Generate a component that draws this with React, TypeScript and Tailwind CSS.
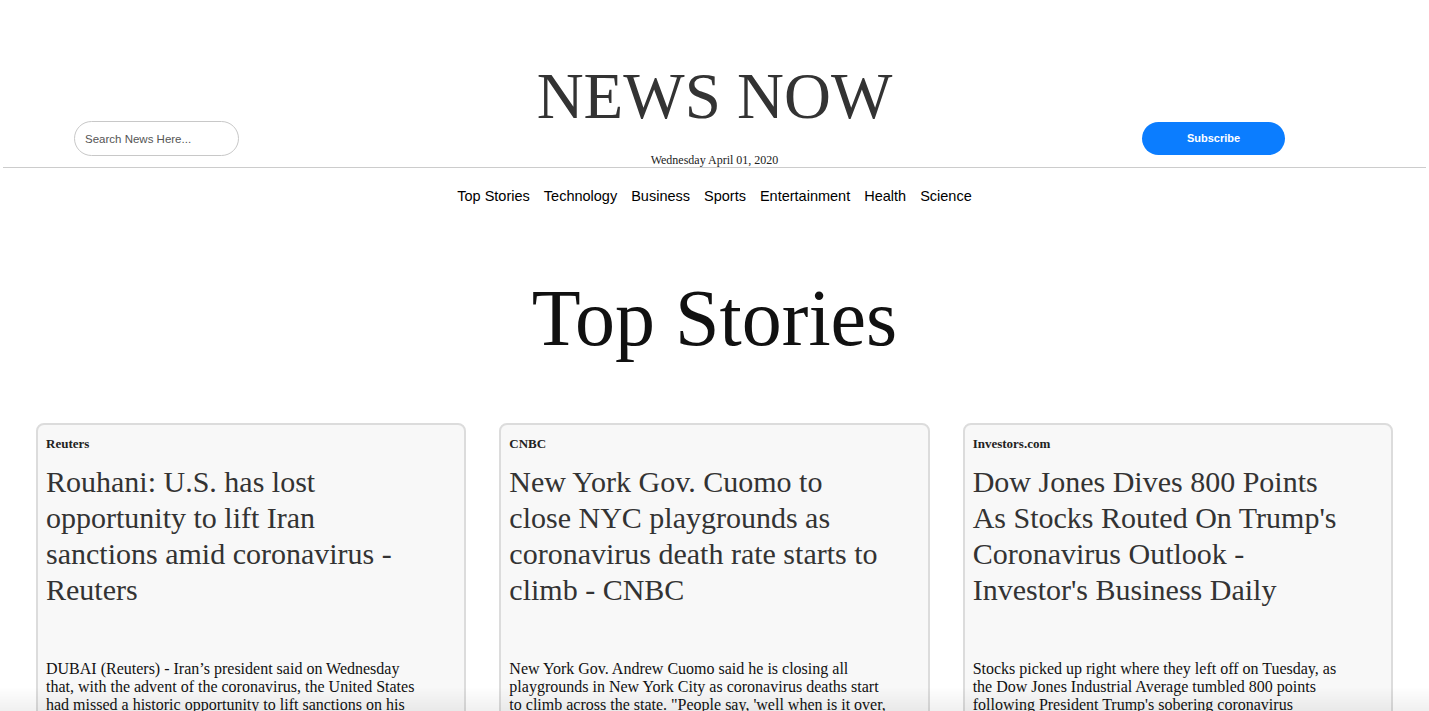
import React from 'react'

interface Story {
  source: string
  title: string
  description: string
  descWidth: string
}

const stories: Story[] = [
  {
    source: 'Reuters',
    title: 'Rouhani: U.S. has lost opportunity to lift Iran sanctions amid coronavirus - Reuters',
    description:
      'DUBAI (Reuters) - Iran\u2019s president said on Wednesday that, with the advent of the coronavirus, the United States had missed a historic opportunity to lift sanctions on his country and its people, and that Washington should apologise.',
    descWidth: 'max-w-[380px]',
  },
  {
    source: 'CNBC',
    title: 'New York Gov. Cuomo to close NYC playgrounds as coronavirus death rate starts to climb - CNBC',
    description:
      'New York Gov. Andrew Cuomo said he is closing all playgrounds in New York City as coronavirus deaths start to climb across the state. "People say, \'well when is it over, when is it going to end?\'"',
    descWidth: 'max-w-[380px]',
  },
  {
    source: 'Investors.com',
    title: "Dow Jones Dives 800 Points As Stocks Routed On Trump's Coronavirus Outlook - Investor's Business Daily",
    description:
      "Stocks picked up right where they left off on Tuesday, as the Dow Jones Industrial Average tumbled 800 points following President Trump's sobering coronavirus outlook for the weeks ahead.",
    descWidth: 'max-w-[370px]',
  },
]

const categories = ['Top Stories', 'Technology', 'Business', 'Sports', 'Entertainment', 'Health', 'Science']

const serif = "font-['Liberation_Serif','Times_New_Roman',serif]"
const sans = "font-['Liberation_Sans',Arial,sans-serif]"

function StoryCard({ story }: { story: Story }) {
  return (
    <article className="bg-[#f8f8f8] border-2 border-[#dcdcdc] rounded-[8px] px-[8px] pt-[11px] pb-[20px]">
      <h5 className="text-[13px] leading-[15px] font-bold text-[#222]">{story.source}</h5>
      <h3 className="mt-[13px] max-w-[371px] text-[30px] leading-[36px] text-[#333]">{story.title}</h3>
      <p className={`mt-[52px] ${story.descWidth} text-[16px] leading-[18px] text-[#111]`}>{story.description}</p>
    </article>
  )
}

export default function App() {
  return (
    <div className={`min-h-screen bg-white ${serif}`}>
      {/* Masthead */}
      <header className="grid grid-cols-[1fr_auto_1fr] items-end pt-[64px]">
        <div className="pl-[74px] pb-[11px]">
          <input
            type="text"
            placeholder="Search News Here..."
            className={`${sans} w-[165px] h-[35px] rounded-full border border-[#c8c8c8] px-[10px] text-[11.5px] text-[#333] placeholder:text-[#555] outline-none`}
          />
        </div>
        <div className="flex flex-col items-center">
          <h1 className="text-[65px] leading-[64px] text-[#333]">NEWS NOW</h1>
          <span className="mt-[25px] text-[12px] leading-[14px] text-[#222]">Wednesday April 01, 2020</span>
        </div>
        <div className="flex justify-end pr-[144px] pb-[12px]">
          <button className={`${sans} w-[143px] h-[33px] rounded-full bg-[#0b7dff] text-white text-[11px] font-bold`}>
            Subscribe
          </button>
        </div>
      </header>
      <div className="mx-[3px] border-t border-[#cccccc]"></div>

      {/* Category nav */}
      <nav className={`${sans} flex justify-center gap-[14px] mt-[20px] text-[14.5px] leading-[16px] text-black`}>
        {categories.map((c) => (
          <a key={c} href="#" className="hover:underline">
            {c}
          </a>
        ))}
      </nav>

      <h2 className="mt-[74px] text-center text-[80px] leading-[80px] text-[#111]">Top Stories</h2>

      <section className="grid grid-cols-3 gap-[33px] px-[36px] mt-[65px] pb-10">
        {stories.map((s) => (
          <StoryCard key={s.source} story={s} />
        ))}
      </section>

      {/* faint bottom shade */}
      <div className="fixed bottom-0 left-0 right-0 h-[24px] bg-gradient-to-b from-transparent to-black/[0.06] pointer-events-none"></div>
    </div>
  )
}
